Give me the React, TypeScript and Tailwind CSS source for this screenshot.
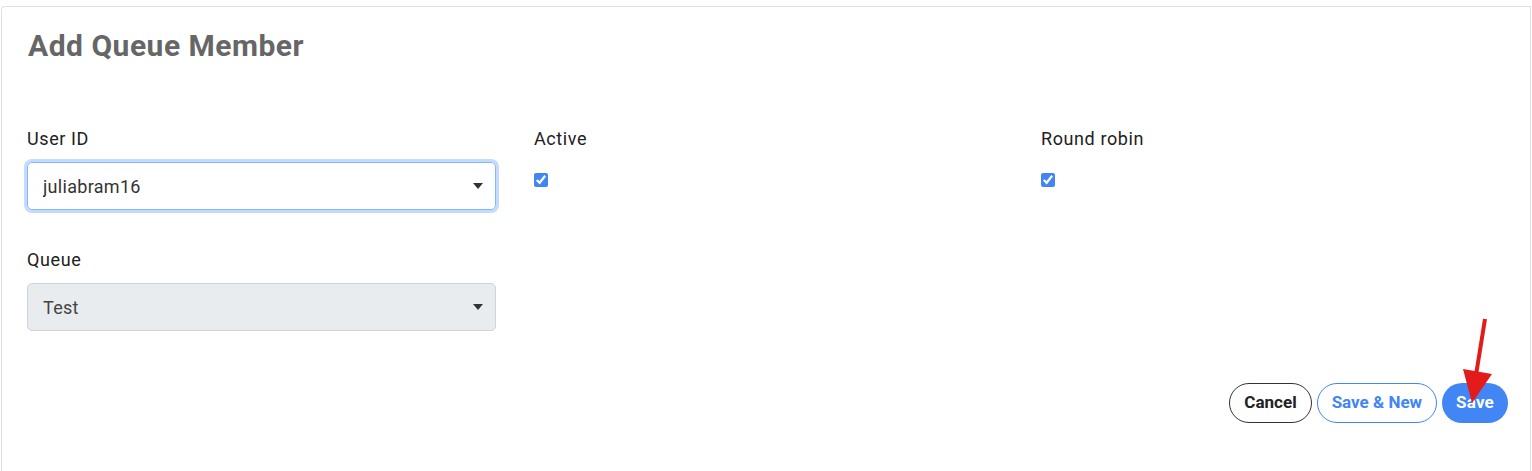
import { ChangeEvent, useState } from 'react'

const font = { fontFamily: 'Roboto, "Open Sans", Arial, sans-serif' }

function Caret() {
  return (
    <svg className="w-[10px] h-[6px] text-[#333]" viewBox="0 0 10 6" fill="currentColor">
      <path d="M0 0h10L5 6z" />
    </svg>
  )
}

export default function App() {
  const [userId, setUserId] = useState('juliabram16')
  const [active, setActive] = useState(true)
  const [roundRobin, setRoundRobin] = useState(true)

  return (
    <div className="min-h-screen bg-white pt-[6px] pl-[1px] pr-[1px]" style={font}>
      <div className="relative border-t border-l border-r border-[#e0e0e0] rounded-tl-[4px] min-h-[465px] pl-[25px] pr-[22px]">
        {/* Header */}
        <h1 className="pt-[20px] pl-[1px] text-[30px] font-bold leading-[38px] tracking-[0.5px] text-[#666666]">
          Add Queue Member
        </h1>

        {/* Fields */}
        <div className="grid grid-cols-[469px_469px_1fr] gap-x-[38px] mt-[62px]">
          <div>
            <label className="block text-[18px] tracking-[0.6px] leading-[24px] text-[#212121] mb-[11px]">User ID</label>
            <div className="relative h-[48px] rounded-[5px] border border-[#86b7fe] shadow-[0_0_0_3px_#c2dbfe] flex items-center pl-[15px] pr-[12px]">
              <input
                value={userId}
                onChange={(e: ChangeEvent<HTMLInputElement>) => setUserId(e.target.value)}
                className="flex-1 outline-none text-[18px] tracking-[0.3px] text-[#333] bg-transparent"
                style={font}
              />
              <Caret />
            </div>
          </div>
          <div>
            <label className="block text-[18px] tracking-[0.6px] leading-[24px] text-[#212121] mb-[22px]">Active</label>
            <input
              type="checkbox"
              checked={active}
              onChange={() => setActive(!active)}
              className="w-[14px] h-[14px] accent-[#4285f4] block"
            />
          </div>
          <div>
            <label className="block text-[18px] tracking-[0.6px] leading-[24px] text-[#212121] mb-[22px]">Round robin</label>
            <input
              type="checkbox"
              checked={roundRobin}
              onChange={() => setRoundRobin(!roundRobin)}
              className="w-[14px] h-[14px] accent-[#4285f4] block"
            />
          </div>

          <div className="mt-[38px]">
            <label className="block text-[18px] tracking-[0.6px] leading-[24px] text-[#212121] mb-[11px]">Queue</label>
            <div className="h-[48px] rounded-[5px] border border-[#ced4da] bg-[#e9ecef] flex items-center pl-[15px] pr-[12px]">
              <span className="flex-1 text-[18px] tracking-[0.3px] text-[#444]">Test</span>
              <Caret />
            </div>
          </div>
        </div>

        {/* Actions */}
        <div className="flex justify-end gap-[5px] mt-[52px]">
          <button className="h-[40px] px-[14px] rounded-full border border-[#333] text-[17px] font-bold text-[#222]">
            Cancel
          </button>
          <button className="h-[40px] px-[14px] rounded-full border border-[#4285f4] text-[17px] font-bold text-[#4285f4]">
            Save &amp; New
          </button>
          <button className="h-[40px] px-[14px] rounded-full bg-[#4285f4] text-[17px] tracking-[0.2px] font-bold text-white">
            Save
          </button>
        </div>

        {/* Annotation arrow */}
        <svg className="absolute left-[1456px] top-[308px] w-[40px] h-[95px] pointer-events-none" viewBox="0 0 40 95">
          <line x1="27" y1="4" x2="18" y2="60" stroke="#e31b1b" strokeWidth="4" />
          <path d="M5 54L34 59L14 88Z" fill="#e31b1b" />
        </svg>
      </div>
    </div>
  )
}
